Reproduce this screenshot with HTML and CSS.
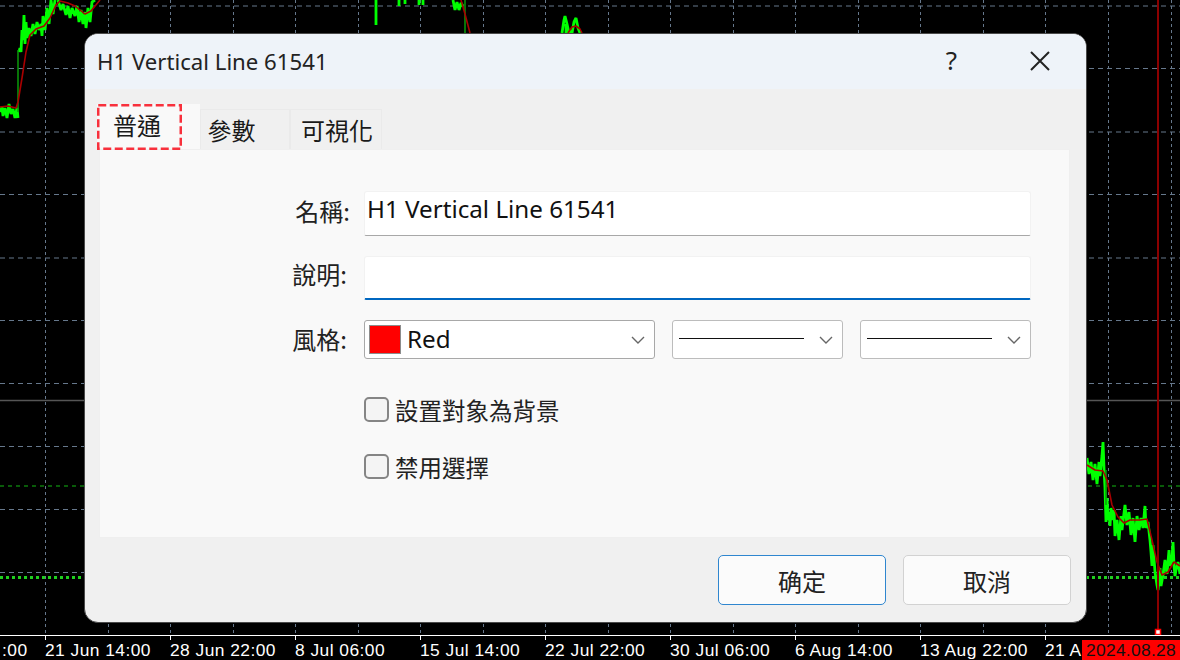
FILE: index.html
```html
<!DOCTYPE html>
<html lang="zh-Hant">
<head>
<meta charset="utf-8">
<title>H1 Vertical Line 61541</title>
<link rel="stylesheet" href="styles.css">
</head>
<body>
<div class="screen">
  <svg class="chart" width="1180" height="640" viewBox="0 0 1180 640" aria-hidden="true">
    <g class="grid-v">
      <path d="M45.5 0V635M108.5 0V635M170.5 0V635M233.5 0V635M295.5 0V635M358.5 0V635M420.5 0V635M483.5 0V635M545.5 0V635M608.5 0V635M670.5 0V635M733.5 0V635M795.5 0V635M858.5 0V635M920.5 0V635M983.5 0V635M1045.5 0V635M1108.5 0V635M1171.5 0V635"/>
    </g>
    <g class="grid-h">
      <path d="M0 6H1180M0 68.5H1180M0 132H1180M0 194.5H1180M0 258H1180M0 320.5H1180M0 383.5H1180M0 446.5H1180M0 509.5H1180M0 572.5H1180"/>
    </g>
    <path class="level" d="M0 400.5H1180"/>
    <path class="green-dash" d="M0 486H1180"/>
    <path class="green-dot" d="M0 577.5H1180"/>
    <g class="price">
      <path d="M0 112L2 107L3 116L5 108L7 118L9 104L11 114L13 109L15 118L17 108L18 118L17 110"/>
      <path d="M19 52L20 48L21 52L22 30L23 40L24 15L25 44L26 22L27 38L29 28L31 36L33 24L35 34L37 22L39 30L41 24L42 36L43 16L45 30L47 8L49 24L51 0L53 14L55 0"/>
      <path d="M58 0L61 10L63 4L66 15L68 6L70 18L72 8L75 16L77 6L79 22L81 10L83 24L85 12L86 28L88 8L90 22L92 2L95 0"/>
      <path d="M376 0V25M399 0V6M405 0V4M419 0V5M423 0V5"/>
      <path d="M453 0L455 10L457 2L459 10L461 3L463 6"/>
      <path d="M562 33L564 20L565 16L567 24L569 33M572 33L574 22L576 18L578 28L580 33M566 33V24M570 33V30"/>
      <path d="M1087 458L1089 474L1091 462L1093 480L1095 464L1097 484L1099 462L1100 476L1102 456L1103 442L1104 468L1105 488L1106 522L1107 498L1108 520L1109 512L1110 526L1111 508L1113 520L1114 510L1115 536L1117 520L1119 540L1121 516L1122 530L1125 505L1127 525L1129 512L1131 535L1133 518L1135 542L1137 516L1139 530L1141 518L1143 528L1145 506L1146 528L1148 522L1150 540L1151 552L1152 566L1153 545L1155 572L1157 585L1158 590L1160 568L1161 586L1163 575L1165 560L1167 574L1169 550L1170 566L1172 558L1173 542L1174 565L1175 576L1176 570L1178 562L1180 574"/>
    </g>
    <path class="price-dark" d="M18 112V50M465 0V33M1106 470V505"/>
    <g class="average">
      <path d="M0 107L8 106L16 108L18 102L22 78L26 52L30 35L36 29L44 26L50 18L56 5L60 1L68 3L75 6L85 14L91 11L100 0"/>
      <path d="M461 0L465 14L470 33"/>
      <path d="M568 33L572 27L576 26L580 29L582 33"/>
      <path d="M1087 465L1095 470L1103 471L1107 480L1112 505L1118 517L1124 523L1130 520L1140 520L1147 519L1152 540L1157 562L1162 575L1168 572L1174 562L1180 566"/>
    </g>
    <path class="vline" d="M1158 0V630"/>
    <rect class="vmark" x="1155.5" y="629.5" width="5" height="5"/>
    <path class="axis" d="M0 635.5H1180"/>
  </svg>

  <div class="axis-labels">
    <span class="tick tick-first">:00</span>
    <span class="tick">21 Jun 14:00</span>
    <span class="tick">28 Jun 22:00</span>
    <span class="tick">8 Jul 06:00</span>
    <span class="tick">15 Jul 14:00</span>
    <span class="tick">22 Jul 22:00</span>
    <span class="tick">30 Jul 06:00</span>
    <span class="tick">6 Aug 14:00</span>
    <span class="tick">13 Aug 22:00</span>
    <span class="tick tick-last">21 A</span>
  </div>
  <div class="date-flag">2024.08.28</div>

  <section class="dialog">
    <header class="titlebar">
      <span class="title">H1 Vertical Line 61541</span>
      <span class="help">?</span>
      <svg class="close" width="20" height="20" viewBox="0 0 20 20" aria-hidden="true"><path d="M1 1L19 19M19 1L1 19"/></svg>
    </header>
    <div class="dialog-body">
      <nav class="tabs">
        <div class="tab tab-active">普通
          <svg class="focus-mark" width="85" height="46" viewBox="0 0 85 46" aria-hidden="true"><rect x="1.25" y="1.25" width="82.5" height="43.5"/></svg>
        </div>
        <div class="tab tab-params">參數</div>
        <div class="tab tab-visual">可視化</div>
      </nav>
      <div class="panel">
        <div class="row row-name">
          <label class="label label-name">名稱:</label>
          <div class="input input-name">H1 Vertical Line 61541</div>
        </div>
        <div class="row row-desc">
          <label class="label label-desc">說明:</label>
          <div class="input input-focus"></div>
        </div>
        <div class="row row-style">
          <label class="label label-style">風格:</label>
          <div class="selects">
            <div class="select select-color">
              <span class="swatch"></span><span class="select-text">Red</span>
              <svg class="chev" width="14" height="8" viewBox="0 0 14 8" aria-hidden="true"><path d="M1 1L7 7L13 1"/></svg>
            </div>
            <div class="select">
              <span class="stroke"></span>
              <svg class="chev" width="14" height="8" viewBox="0 0 14 8" aria-hidden="true"><path d="M1 1L7 7L13 1"/></svg>
            </div>
            <div class="select">
              <span class="stroke"></span>
              <svg class="chev" width="14" height="8" viewBox="0 0 14 8" aria-hidden="true"><path d="M1 1L7 7L13 1"/></svg>
            </div>
          </div>
        </div>
        <div class="checks">
          <div class="check"><span class="box"></span><span>設置對象為背景</span></div>
          <div class="check"><span class="box"></span><span>禁用選擇</span></div>
        </div>
      </div>
      <footer class="footer">
        <button class="btn btn-primary" type="button">确定</button>
        <button class="btn" type="button">取消</button>
      </footer>
    </div>
  </section>
</div>
</body>
</html>
```
FILE: styles.css
```css
* { box-sizing: border-box; }
html, body { margin: 0; padding: 0; background: #000; }
.screen {
  position: relative;
  width: 1180px;
  height: 660px;
  overflow: hidden;
  background: #000;
  font-family: "Noto Sans", "Noto Sans CJK TC", sans-serif;
  color: #1a1a1a;
}

/* chart */
.chart { display: block; }
.chart path { fill: none; }
.grid-v path { stroke: #66788c; stroke-width: 1; stroke-dasharray: 3 3; }
.grid-h path { stroke: #66788c; stroke-width: 1.2; stroke-dasharray: 5 4; }
.chart .level { stroke: #555; stroke-width: 1.6; }
.chart .green-dash { stroke: #0c7a0c; stroke-width: 1.5; stroke-dasharray: 4 4; }
.chart .green-dot { stroke: #1fd01f; stroke-width: 3; stroke-dasharray: 3 3; }
.price path { stroke: #00ff00; stroke-width: 2.8; stroke-linejoin: bevel; }
.chart .price-dark { stroke: #0a9a0a; stroke-width: 1.5; }
.average path { stroke: #a80000; stroke-width: 1.6; stroke-linejoin: round; }
.chart .vline { stroke: #8b0000; stroke-width: 2; }
.vmark { fill: #fff; stroke: #f00; stroke-width: 1.5; }
.chart .axis { stroke: #fff; stroke-width: 1; }

.axis-labels {
  display: flex;
  height: 20px;
  font-family: "Liberation Sans", sans-serif;
  font-size: 17.4px;
  letter-spacing: 0.45px;
  line-height: 20px;
  color: #fff;
  white-space: nowrap;
}
.tick {
  flex: 0 0 125px;
  position: relative;
}
.tick-first { flex-basis: 45px; padding-left: 2px; }
.tick-last { flex-basis: 37px; }
.tick::before {
  content: "";
  position: absolute;
  left: 0;
  top: -5px;
  width: 1px;
  height: 5px;
  background: #fff;
}
.tick-first::before { display: none; }

.date-flag {
  position: absolute;
  left: 1082px;
  top: 640px;
  width: 98px;
  height: 20px;
  background: #f00;
  color: #111;
  font-family: "Liberation Sans", sans-serif;
  font-size: 17.4px;
  letter-spacing: 0.3px;
  line-height: 20px;
  text-align: center;
}

/* dialog */
.dialog {
  position: absolute;
  left: 84px;
  top: 33px;
  width: 1003px;
  height: 590px;
  display: flex;
  flex-direction: column;
  border: 1px solid #4a4a4a;
  border-radius: 14px;
  background: #f0f0f0;
  overflow: hidden;
}
.titlebar {
  flex: 0 0 55px;
  display: flex;
  align-items: center;
  padding: 0 36px 0 12px;
  background: #eef3f9;
}
.title { flex: 1; font-size: 22.2px; color: #222; }
.help { font-size: 26px; margin-right: 73px; color: #222; line-height: 1; padding-bottom: 3px; }
.close { margin-bottom: 1px; }
.close path { stroke: #222; stroke-width: 2; fill: none; }

.dialog-body { flex: 1; display: flex; flex-direction: column; padding: 15px 16px 0 14px; }

.tabs { display: flex; align-items: flex-end; height: 45px; margin-left: -2px; font-family: "Noto Sans CJK TC", sans-serif; font-size: 24px; }
.tab {
  display: flex;
  align-items: center;
  justify-content: center;
  height: 40px;
  background: #f0f0f0;
  border: 1px solid #eaeaea;
  border-bottom: 0;
}
.tab-active {
  position: relative;
  height: 45px;
  width: 103px;
  padding: 0 23px 4px 0;
  background: #f9f9f9;
  border: 0;
}
.focus-mark {
  position: absolute;
  left: 0;
  top: 0;
}
.focus-mark rect { fill: none; stroke: #f8303c; stroke-width: 2.5; stroke-dasharray: 8 3.5; }
.tab-params { width: 90px; padding-right: 27px; }
.tab-visual { width: 92px; padding-left: 2px; }

.panel {
  flex: 0 0 389px;
  padding: 41px 38px 0 164px;
  background: #f9f9f9;
  border: 1px solid #efefef;
}
.row { display: flex; align-items: center; font-family: "Noto Sans CJK TC", sans-serif; font-size: 24px; }
.label { flex: 0 0 100px; padding-right: 17px; text-align: right; white-space: nowrap; color: #222; }
.label-name { padding-right: 14px; padding-bottom: 6px; }
.label-desc { padding-bottom: 10px; }
.label-style { padding-bottom: 2px; }
.input-name,
.input-focus { flex: 1; background: #fff; border-radius: 3px 3px 2px 2px; }
.row-name { height: 45px; margin-bottom: 20px; }
.input-name {
  height: 45px;
  padding: 0 2px 10px;
  display: flex;
  align-items: center;
  font-family: "Noto Sans", sans-serif;
  font-size: 24.2px;
  color: #111;
  border: 1px solid #f2f2f2;
  border-bottom: 1px solid #a8a8a8;
}
.row-desc { height: 44px; margin-bottom: 20px; }
.input-focus { height: 44px; border: 1px solid #f2f2f2; border-bottom: 2px solid #0067c0; }
.row-style { height: 39px; }
.selects { flex: 1; display: grid; grid-template-columns: 291fr 171fr 171fr; column-gap: 16.5px; }
.select {
  height: 39px;
  display: flex;
  align-items: center;
  padding: 0 9px 0 6px;
  background: #fff;
  border: 1px solid #bcbcbc;
  border-radius: 3px;
}
.select-color { padding-left: 4px; border-color: #a8a8a8; }
.swatch { width: 32px; height: 29px; background: #f00; border: 1px solid #8c8c8c; }
.select-text { margin-left: 6px; padding-bottom: 2px; font-family: "Noto Sans", sans-serif; font-size: 24.2px; color: #111; }
.stroke { width: 125px; height: 1.5px; margin-top: -2px; background: #111; }
.chev { margin-left: auto; }
.chev path { fill: none; stroke: #666; stroke-width: 1.4; }

.checks {
  display: flex;
  flex-direction: column;
  gap: 30px;
  margin: 37px 0 0 100px;
  font-family: "Noto Sans CJK TC", sans-serif;
  font-size: 23.5px;
  color: #222;
}
.check { display: flex; align-items: center; gap: 6px; height: 27px; }
.box { width: 25px; height: 25px; border: 2px solid #858585; border-radius: 5px; background: #f4f4f4; }

.footer { display: flex; justify-content: flex-end; gap: 17px; margin-top: 17px; margin-right: -1px; }
.btn {
  width: 168px;
  height: 50px;
  padding: 0;
  background: #fbfbfb;
  border: 1.5px solid #d2d2d2;
  border-radius: 5px;
  font-family: "Noto Sans CJK TC", sans-serif;
  font-size: 24px;
  color: #222;
}
.btn.btn-primary { border: 1.5px solid #2f86cf; }
```
